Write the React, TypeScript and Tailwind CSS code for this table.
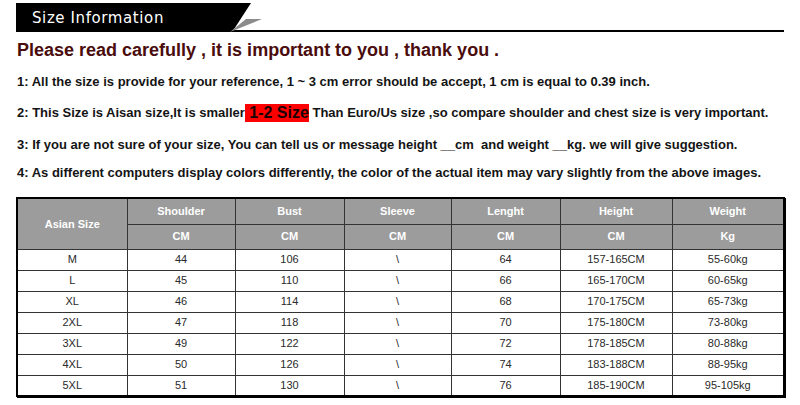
import React from "react";

const rows = [
  { size: "M", shoulder: "44", bust: "106", length: "64", height: "157-165CM", weight: "55-60kg" },
  { size: "L", shoulder: "45", bust: "110", length: "66", height: "165-170CM", weight: "60-65kg" },
  { size: "XL", shoulder: "46", bust: "114", length: "68", height: "170-175CM", weight: "65-73kg" },
  { size: "2XL", shoulder: "47", bust: "118", length: "70", height: "175-180CM", weight: "73-80kg" },
  { size: "3XL", shoulder: "49", bust: "122", length: "72", height: "178-185CM", weight: "80-88kg" },
  { size: "4XL", shoulder: "50", bust: "126", length: "74", height: "183-188CM", weight: "88-95kg" },
  { size: "5XL", shoulder: "51", bust: "130", length: "76", height: "185-190CM", weight: "95-105kg" },
];

const headers = [
  { label: "Shoulder", unit: "CM" },
  { label: "Bust", unit: "CM" },
  { label: "Sleeve", unit: "CM" },
  { label: "Lenght", unit: "CM" },
  { label: "Height", unit: "CM" },
  { label: "Weight", unit: "Kg" },
];

const widths = ["w-[110px]", "w-[108px]", "w-[109px]", "w-[107px]", "w-[109px]", "w-[112px]", "w-[112px]"];

export default function App() {
  return (
    <div className="w-[800px] h-[405px] bg-white overflow-hidden font-['Liberation_Sans',Arial,sans-serif]">
      {/* title bar */}
      <div className="relative h-[33px] pt-[3px] pl-[16px] pr-[16px]">
        <div className="h-[29px] border-b-2 border-black relative">
          <div className="absolute left-0 top-0 h-[29px] w-[235px] bg-black [clip-path:polygon(0_0,100%_0,92%_100%,0_100%)]" />
          <svg className="absolute left-[212px] top-[14px]" width="40" height="15" viewBox="0 0 40 15">
            <polygon points="2,15 18,2 34,2" fill="#8c8c8c" />
          </svg>
          <span className="absolute left-[16px] top-[6px] text-white text-[15px] tracking-[0.6px] leading-[18px] font-['DejaVu_Sans',Verdana,sans-serif]">
            Size Information
          </span>
        </div>
      </div>

      <div className="h-[34px] pl-[17px] flex items-center text-[18px] font-bold text-[#4a0c0c]">
        Please read carefully , it is important to you , thank you .
      </div>

      <div className="pl-[17px] text-[13px] font-bold text-[#141414]">
        <div className="h-[30px] flex items-center">
          1: All the size is provide for your reference, 1 ~ 3 cm error should be accept, 1 cm is equal to 0.39 inch.
        </div>
        <div className="h-[32px] flex items-center whitespace-pre">
          2: This Size is Aisan size,It is smaller<span className="bg-[#ff0000] text-[16px] leading-[18px] text-[#1a0000]"> 1-2 Size</span> Than Euro/Us size ,so compare shoulder and chest size is very important.
        </div>
        <div className="h-[31px] flex items-center whitespace-pre">
          3: If you are not sure of your size, You can tell us or message height __cm  and weight __kg. we will give suggestion.
        </div>
        <div className="h-[26px] flex items-center">
          4: As different computers display colors differently, the color of the actual item may vary slightly from the above images.
        </div>
      </div>

      <div className="pl-[16px] mt-[11px]">
        <table className="border-collapse border-2 border-black text-[11px] text-center shadow-[1px_1px_0_#000]">
          <thead>
            <tr className="h-[26px] bg-[#9c9c9c] text-white font-bold">
              <th rowSpan={2} className={`${widths[0]} border border-[#333] font-bold`}>Asian Size</th>
              {headers.map((h, i) => (
                <th key={h.label} className={`${widths[i + 1]} border border-[#333] font-bold`}>{h.label}</th>
              ))}
            </tr>
            <tr className="h-[25px] bg-[#9c9c9c] text-white">
              {headers.map(h => (
                <th key={h.label} className="border border-[#333] font-bold">{h.unit}</th>
              ))}
            </tr>
          </thead>
          <tbody className="text-[#2a2a2a]">
            {rows.map(r => (
              <tr key={r.size} className="h-[21px]">
                <td className="border border-[#333] p-0">{r.size}</td>
                <td className="border border-[#333] p-0">{r.shoulder}</td>
                <td className="border border-[#333] p-0">{r.bust}</td>
                <td className="border border-[#333] p-0">\</td>
                <td className="border border-[#333] p-0">{r.length}</td>
                <td className="border border-[#333] p-0">{r.height}</td>
                <td className="border border-[#333] p-0">{r.weight}</td>
              </tr>
            ))}
          </tbody>
        </table>
      </div>
    </div>
  );
}
